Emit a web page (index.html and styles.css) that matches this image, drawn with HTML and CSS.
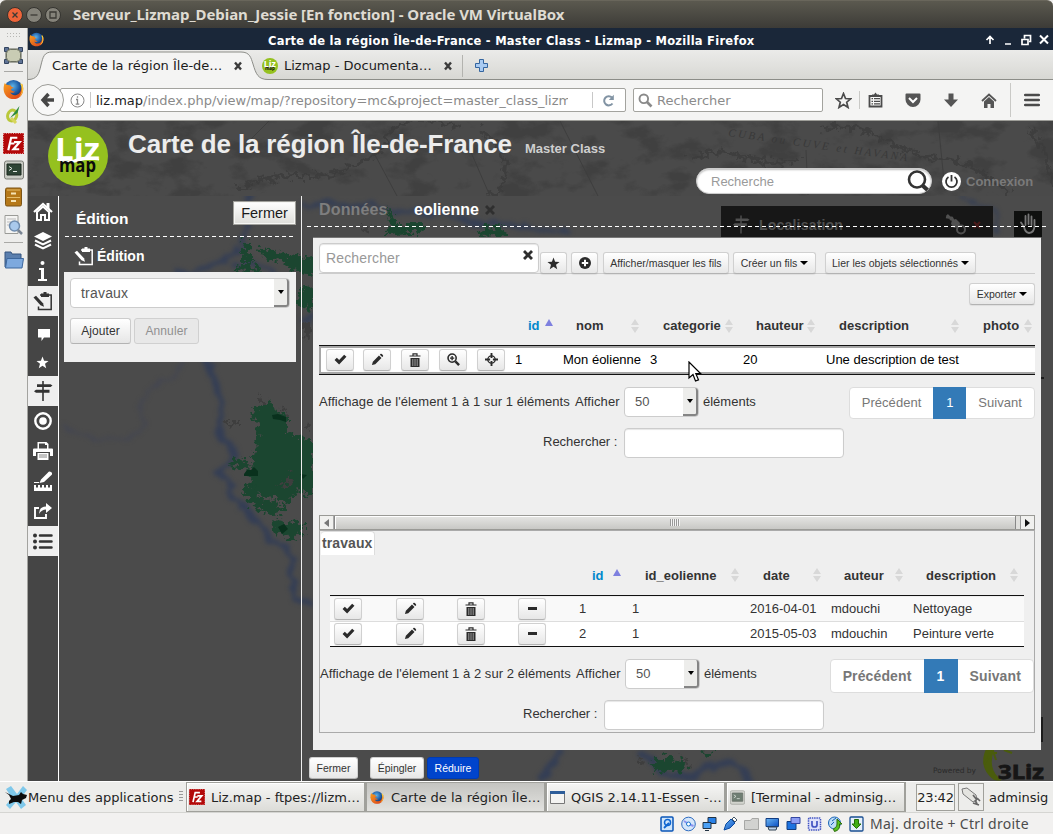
FILE: index.html
```html
<!DOCTYPE html>
<html lang="fr">
<head>
<meta charset="utf-8">
<title>Carte de la région Île-de-France - Master Class - Lizmap</title>
<link rel="stylesheet" href="styles.css">
</head>
<body>
<svg class="defs" width="0" height="0" aria-hidden="true">
  <defs>
    <radialGradient id="fx" cx=".45" cy=".35" r=".6"><stop offset="0" stop-color="#5fb4e8"/><stop offset=".6" stop-color="#1f5ea8"/><stop offset="1" stop-color="#12305f"/></radialGradient>
    <linearGradient id="fo" x1="0" y1="0" x2="1" y2="1"><stop offset="0" stop-color="#f8a11f"/><stop offset="1" stop-color="#d8371a"/></linearGradient>
    <linearGradient id="bl" x1="0" y1="0" x2="1" y2="1"><stop offset="0" stop-color="#6db7f2"/><stop offset="1" stop-color="#0a4fc4"/></linearGradient>
    <symbol id="i-firefox" viewBox="0 0 22 22"><circle cx="11" cy="10.500" r="9.500" fill="url(#fx)"/><path d="M2 4C0 8 0 14 3.500 18c4 4 11 4 15 0 3-3 3.500-9 1.500-13 0 2-.3 3-.8 4 0 4-2 7.500-6 8-3 .3-5-1-5.500-3 2 1 4 .5 5-.8-2 .2-3-1.200-4.500-1.500 0-1.500 2-2 3-3-2 0-3-1-3.500-2.200C5.500 6.500 4.500 6 4 6 3 5.500 2.300 5 2 4z" fill="url(#fo)"/><path d="M18 5c3 5 2 11-2 14 5-2 6.500-9 4-14z" fill="#fbd13c"/></symbol>
    <symbol id="i-fz" viewBox="0 0 22 22"><path d="M0 0h22v22H0z" fill="#b30909"/><path d="M.5.500h21v21H.5z" fill="none" stroke="#e9b3b3" stroke-dasharray="1 1.500"/><path d="M5.500 18L8.500 5H15M7 11h5M11.500 9.500h6l-6.500 7.500h6" fill="none" stroke="#fff" stroke-width="2.300"/></symbol>
    <symbol id="i-term" viewBox="0 0 20 20"><rect x=".5" y="1" width="19" height="18" rx="2" fill="#c9ccc4" stroke="#7b7d77"/><path d="M3 4h14v11H3z" fill="#2e4535" stroke="#1d2a20"/><path d="M5 6.500l3 2-3 2M9 11.500h4" fill="none" stroke="#dfe8df"/></symbol>
    <symbol id="i-check" viewBox="0 0 14 12"><path d="M.5 6.500L3 4l2.500 2.600L11 .8 13.500 3l-8 8.500z"/></symbol>
    <symbol id="i-pencil" viewBox="0 0 14 14"><path d="M1 13l1-3.600 6.600-6.700 2.700 2.700L4.600 12zM9.500 1.900l1-1c.8-.6 3 1.500 2.600 2.500l-1 1z"/></symbol>
    <symbol id="i-trash" viewBox="0 0 12 14"><path d="M.5 3h11M4 2.500V.8h4v1.700" fill="none" stroke="currentColor" stroke-width="1.200"/><path d="M1.500 5h9v9h-9z"/><path d="M3.800 6v7M6 6v7M8.200 6v7" stroke="#aaa" stroke-width=".9"/></symbol>
    <symbol id="i-zoom" viewBox="0 0 14 14"><circle cx="5.500" cy="5.500" r="4.400" fill="none" stroke="currentColor" stroke-width="1.700"/><path d="M3.200 5.500h4.600M5.500 3.200v4.600" stroke="currentColor" stroke-width="1.500"/><path d="M9 9l4 4" stroke="currentColor" stroke-width="2.600"/></symbol>
    <symbol id="i-cross" viewBox="0 0 14 14"><circle cx="7" cy="7" r="4" fill="none" stroke="currentColor" stroke-width="1.400"/><path d="M7 0v5.500M7 8.500V14M0 7h5.500M8.500 7H14" stroke="currentColor" stroke-width="2"/></symbol>
    <symbol id="i-star" viewBox="0 0 14 14"><path d="M7 .5l1.700 4.700 4.800.2-3.800 3 1.300 4.800L7 10.400l-4 2.800 1.300-4.800-3.800-3 4.800-.2z"/></symbol>
    <symbol id="i-plus" viewBox="0 0 12 12"><circle cx="6" cy="6" r="6"/><path d="M2.800 6h6.400M6 2.800v6.400" stroke="#fff" stroke-width="2"/></symbol>
    <symbol id="i-x" viewBox="0 0 12 12"><path d="M3 1l3 3 3-3 2 2-3 3 3 3-2 2-3-3-3 3-2-2 3-3-3-3z"/></symbol>
    <symbol id="i-sort" viewBox="0 0 8 14"><path d="M4 0l4 6H0zM4 14l4-6H0z"/></symbol>
    <symbol id="i-edit" viewBox="0 0 20 20"><path d="M7 4h11.200v14.500H5.500V15.500" fill="none" stroke="currentColor" stroke-width="1.500"/><path d="M8 2.500h2.500V1h3v1.500H16V6H8z"/><path d="M.5 6.500L3 4.800l7 7.500 1 3.500-3.500-1.600z"/></symbol>
    <symbol id="i-sign" viewBox="0 0 20 20"><path d="M9.200 0h1.600v20H9.200z"/><path d="M4 3.200h13.500l2 1.400-2 1.500H4zM16.500 8.700H3L1 10.200l2 1.500h13.500z"/></symbol>
    <symbol id="i-tabx" viewBox="0 0 10 10"><path d="M2 1.500l6 7M8 1.500l-6 7" stroke="currentColor" stroke-width="2.400"/></symbol>
    <symbol id="i-liz" viewBox="0 0 60 60"><circle cx="30" cy="30" r="30" fill="#95c11f"/><text x="7" y="34" fill="#fff" font-family="Open Sans, Noto Sans, sans-serif" font-size="30" font-weight="700" textLength="45" lengthAdjust="spacingAndGlyphs">Liz</text><path d="M9 33q14 3 21-1 9-3 21 1v1.500q-12-2-20 1-8 3-22-1z" fill="#fff"/><text x="11" y="46" fill="#0b0b0b" font-family="Open Sans, Noto Sans, sans-serif" font-size="19" font-weight="700" textLength="37" lengthAdjust="spacingAndGlyphs">map</text></symbol>
  </defs>
</svg>

<header class="vbox-title">
  <span class="wbtn wclose"><svg width="8" height="8" viewBox="0 0 8 8"><path d="M1.500 1.500l5 5M6.500 1.500l-5 5"/></svg></span>
  <span class="wbtn"><svg width="8" height="8" viewBox="0 0 8 8"><path d="M.5 4h7"/></svg></span>
  <span class="wbtn"><svg width="8" height="8" viewBox="0 0 8 8"><path d="M1 1h6v6H1z"/></svg></span>
  <span class="vbox-name">Serveur_Lizmap_Debian_Jessie [En fonction] - Oracle VM VirtualBox</span>
</header>

<div class="vm">
  <nav class="dock">
    <span class="grip"></span>
    <svg class="d1" width="19" height="17" viewBox="0 0 19 17"><path d="M2 2h15v13H2z" fill="#babda6" stroke="#5c6152"/><path d="M.5.500h4v4h-4zM14.500.500h4v4h-4zM.5 12.500h4v4h-4zM14.500 12.500h4v4h-4z" fill="#5f7395" stroke="#33445f"/><rect x="2.500" y="2.500" width="14" height="12" rx="4" fill="#c9ccb4" stroke="#6d7262"/></svg>
    <i class="dsep"></i>
    <svg class="d2" width="21" height="21"><use href="#i-firefox"/></svg>
    <svg class="d3" width="19" height="19" viewBox="0 0 19 19"><ellipse cx="8" cy="9.500" rx="4.500" ry="5.500" fill="none" stroke="#b9c83a" stroke-width="3" transform="rotate(20 8 10)"/><path d="M7 12l5 5" stroke="#d8d65c" stroke-width="3"/><path d="M6 12L15.500 0l-2 7z" fill="#2c8a3c"/></svg>
    <svg class="d4" width="21" height="21"><use href="#i-fz"/></svg>
    <svg class="d5" width="20" height="20"><use href="#i-term"/></svg>
    <svg class="d6" width="17" height="20" viewBox="0 0 17 20"><rect x=".5" y="1" width="16" height="18" rx="1.500" fill="#b57818" stroke="#7c5516"/><path d="M2 3h13M2 10.500h13" stroke="#e5bd6b"/><path d="M6 6.500h5M6 14h5" stroke="#f5e3b5" stroke-width="2"/></svg>
    <svg class="d7" width="19" height="20" viewBox="0 0 19 20"><path d="M1 .5h13v18H1z" fill="#f4f4f2" stroke="#9a9b97"/><path d="M3 4h9M3 7h4M3 10h3" stroke="#bbb"/><circle cx="10.500" cy="11" r="5" fill="#a9c9ec" stroke="#6f8cae" stroke-width="1.500"/><path d="M14 15l4 4" stroke="#7a8694" stroke-width="2.500"/></svg>
    <i class="dsep"></i>
    <svg class="d8" width="20" height="19" viewBox="0 0 20 19"><path d="M1 17V2h6l1 2h9v4" fill="#5a7fae" stroke="#35557f"/><path d="M1.500 18L3 8.500h16.500L18 18z" fill="#7da9de" stroke="#3c679d"/></svg>
  </nav>

  <main class="browser">
    <div class="ff-title">
      <svg width="15" height="15"><use href="#i-firefox"/></svg>
      <b>Carte de la région Île-de-France - Master Class - Lizmap - Mozilla Firefox</b>
      <svg class="ff-ctl" width="64" height="12" viewBox="0 0 64 12" fill="none" stroke="#fff" stroke-width="2"><path d="M5 10V3M1.500 6L5 2.500 8.500 6M20 10h6M37 5.500h6v5h-6zM39.500 4.500V1.500h6v6H44" stroke-width="1.700"/><path d="M55 1.500l8 8M63 1.500l-8 8"/></svg>
    </div>

    <div class="tabs">
      <svg class="tab-shape" width="250" height="30" viewBox="0 0 250 30"><path d="M0 30V29.500C9 29.500 11 24 13 15 15 7 16 2 24 2H213C222 2 223 8 225 14 228 24 230 29.500 240 29.500V30z" fill="#f4f4f3"/><path d="M0 29.500C9 29.500 11 24 13 15 15 7 16 2 24 2H213C222 2 223 8 225 14 228 24 230 29.500 240 29.500H250" fill="none" stroke="#8c8d88"/></svg>
      <span class="tab-name t1">Carte de la région Île-de…</span>
      <svg class="tx1" width="10" height="10"><use href="#i-tabx"/></svg>
      <svg class="fav" width="16" height="16"><use href="#i-liz"/></svg>
      <span class="tab-name t2">Lizmap - Documenta…</span>
      <svg class="tx2" width="10" height="10"><use href="#i-tabx"/></svg>
      <i class="tsep"></i>
      <svg class="tplus" width="13" height="13" viewBox="0 0 13 13"><path d="M4.500.500h4v4h4v4h-4v4h-4v-4h-4v-4h4z" fill="#a9cbf2" stroke="#34659f"/></svg>
    </div>

    <div class="nav">
      <span class="back"><svg width="16" height="16" viewBox="0 0 16 16"><path d="M8.500 2L3 8l5.500 6M3 8h11" fill="none" stroke="#474747" stroke-width="3.400"/></svg></span>
      <div class="url">
        <svg width="15" height="15" viewBox="0 0 15 15" fill="none" stroke="#888"><circle cx="7.500" cy="7.500" r="6.500"/><path d="M7.500 3.200v1.600M6 6.500h1.500V11M5.700 11.200h3.600" stroke-width="1.300"/></svg>
        <i class="vsep"></i>
        <span class="url-text"><b>liz.map</b>/index.php/view/map/?repository=mc&amp;project=master_class_lizm</span>
        <i class="vsep"></i>
        <svg class="reload" width="13" height="13" viewBox="0 0 13 13"><path d="M10.500 9.500A4.600 4.600 0 1 1 10 3.500" fill="none" stroke="#8193a3" stroke-width="2"/><path d="M11.800.8V6H6.800z" fill="#8193a3"/></svg>
      </div>
      <div class="ff-search">
        <svg width="15" height="15" viewBox="0 0 15 15" fill="none" stroke="#8a8a8a"><circle cx="5.800" cy="5.800" r="4.300" stroke-width="1.900"/><path d="M9 9l4.500 4.500" stroke-width="2.600"/></svg>
        <span>Rechercher</span>
      </div>
      <svg class="n1" width="17" height="17" viewBox="0 0 17 17"><path d="M8.500 1.500l2 5 5.200.3-4 3.400 1.300 5.200-4.500-2.900L4 15.400l1.300-5.200-4-3.400 5.200-.3z" fill="none" stroke="#4b4b4b" stroke-width="1.700"/></svg>
      <i class="nsep1"></i>
      <svg class="n2" width="15" height="16" viewBox="0 0 15 16"><path d="M1.500 4h12v10.500h-12z" fill="#f8f8f7" stroke="#4b4b4b" stroke-width="1.800"/><path d="M4 4V2.500h2L7.500.500 9 2.500h2V4z" fill="#4b4b4b"/><path d="M3.500 6.700h1.500M6 6.700h6M3.500 9.300h1.500M6 9.300h6M3.500 11.900h1.500M6 11.900h6" stroke="#4b4b4b" stroke-width="1.300"/></svg>
      <svg class="n3" width="16" height="15" viewBox="0 0 16 15"><path d="M1.500.500h13a1 1 0 0 1 1 1V6.500a7.500 7.500 0 0 1-15 0V1.500a1 1 0 0 1 1-1z" fill="#555"/><path d="M4 5l4 4 4-4" fill="none" stroke="#fff" stroke-width="2"/></svg>
      <svg class="n4" width="14" height="15" viewBox="0 0 14 15"><path d="M4.500.500h5v6H14L7 14 0 6.500h4.500z" fill="#555"/></svg>
      <svg class="n5" width="16" height="15" viewBox="0 0 16 15"><path d="M1 8l7-6.500L15 8" fill="none" stroke="#555" stroke-width="1.800"/><path d="M3 8.500l5-4.600 5 4.600V15H9.500v-4h-3v4H3z" fill="#555"/></svg>
      <i class="nsep2"></i>
      <svg class="n6" width="16" height="14" viewBox="0 0 16 14"><path d="M1.200 2h13.600M1.200 7h13.600M1.200 12h13.600" stroke="#4a4a4a" stroke-width="2.600" stroke-linecap="round"/></svg>
    </div>

    <section class="page">
      <div class="banner">
        <svg class="banner-art" width="1025" height="75" viewBox="28 121 1025 75">
          <filter id="paper" x="0" y="0" width="100%" height="100%" color-interpolation-filters="sRGB"><feTurbulence type="fractalNoise" baseFrequency=".03 .05" numOctaves="6" seed="8"/><feColorMatrix values="0 0 0 0 .22  0 0 0 0 .22  0 0 0 0 .22  5 0 0 0 -2.500"/></filter>
          <filter id="rough" x="-5%" y="-30%" width="110%" height="160%" color-interpolation-filters="sRGB"><feTurbulence type="fractalNoise" baseFrequency=".15" numOctaves="4" seed="3"/><feDisplacementMap in="SourceGraphic" scale="16" xChannelSelector="R" yChannelSelector="G"/></filter>
          <rect x="28" y="121" width="1025" height="75" filter="url(#paper)" opacity=".5"/>
          <g fill="none" stroke="#3b3b3b" stroke-width="4" filter="url(#rough)" opacity=".75"><path d="M240 190q20-15 60-14t50-10M350 165q30-5 40-30t70-8M480 130q30 20 25 45t-20 20M690 158q30-10 50-2t60 6M820 130q30-10 60 8t60 20 70 36M1030 130q20 20 22 60"/></g>
          <path d="M270 120l-30 30M375 155l22 41M470 150l20 46M560 121l38 75M938 121l7 70M806 150l2 45" stroke="#3e3e3e" fill="none"/>
          <text fill="#393939" font-family="Liberation Serif" font-style="italic" font-size="11" letter-spacing="2.500" transform="translate(728 136) rotate(8)">CUBA ou CUVE et HAVANA</text>
        </svg>
        <svg class="logo" width="60" height="60"><use href="#i-liz"/></svg>
        <h1>Carte de la région Île-de-France</h1>
        <span class="subtitle">Master Class</span>
        <div class="pill"><span>Recherche</span><svg width="22" height="22" viewBox="0 0 22 22" fill="none" stroke="#333"><circle cx="10" cy="9.500" r="8" stroke-width="2.600"/><path d="M15 15l5.500 5" stroke-width="4"/></svg></div>
        <div class="login"><svg width="19" height="19" viewBox="0 0 19 19"><circle cx="9.500" cy="9.500" r="9.500" fill="#fff"/><path d="M6.500 5a5.500 5.500 0 1 0 6 0M9.500 3v6.500" fill="none" stroke="#333" stroke-width="1.800"/></svg><span>Connexion</span></div>
      </div>

      <div class="work">
        <svg class="map" width="1025" height="585" viewBox="28 196 1025 585">
          <defs>
            <filter id="soft" filterUnits="userSpaceOnUse" x="28" y="180" width="1025" height="620" color-interpolation-filters="sRGB"><feTurbulence type="fractalNoise" baseFrequency=".09" numOctaves="2" seed="5"/><feDisplacementMap in="SourceGraphic" scale="12" xChannelSelector="R" yChannelSelector="G"/><feGaussianBlur stdDeviation="2.200"/></filter>
            <filter id="edge" filterUnits="userSpaceOnUse" x="28" y="180" width="1025" height="620" color-interpolation-filters="sRGB"><feTurbulence type="fractalNoise" baseFrequency=".18" numOctaves="3" seed="2"/><feDisplacementMap in="SourceGraphic" scale="16" xChannelSelector="R" yChannelSelector="G"/></filter>
          </defs>
          <path d="M28 196h1025v585H28z" fill="#4b4b4b"/>
          <g fill="none" stroke="#343e55" stroke-linejoin="round" filter="url(#soft)">
            <path d="M250 190L247 225 243 245 225 260 205 268 190 274 175 272M205 355L212 372 217 388 222 402 219 420 221 437 236 450 230 462 219 473 230 485 231 497 245 508 255 521 266 528 268 540 285 545 292 560 292 585 300 603 314 604" stroke-width="6"/>
            <path d="M60 426L75 433 92 437 105 441 128 439 146 425 139 405 155 385 175 378 180 362" stroke-width="2.500" stroke="#424553"/>
            <path d="M302 206L330 202 350 208 368 204 400 212 440 212 470 222 520 226 570 232M232 266Q255 258 275 275M302 322L314 318" stroke-width="5"/>
            <path d="M960 196L978 206 994 208 996 236" stroke-width="3"/>
            <path d="M540 781L552 765 562 748M640 752L664 772 690 778 710 766 735 762 750 781" stroke-width="7"/>
          </g>
          <g fill="#1b4630" filter="url(#edge)">
            <path d="M252 410L267 404 275 403 277 412 288 418 288 431 298 437 314 440V500L300 490 287 503 267 497 250 487 253 457 258 437 255 420z"/>
            <path d="M228 465l10-8 12 6-2 8zM240 488l12-6 6 12 10 8 18 4-6 10-24-6zM272 520l32 4 0 8-10 8-18-6zM244 240l6 0 0 12 6 10-14 0zM234 272L240 264 252 264 262 274zM258 248l14 2 20 4 24 6v16l-24-6-8-8-20-4zM296 290l18-4v24l-16-4zM386 206l12 18 28 0-6 8-30 4-6 0 6-12zM478 229l24-3 6 10-28 2zM650 762l20-6 8 6 10-2-4 10-30 2zM698 750l18 2-8 6z"/>
          </g>
          <path d="M244 474l3-4 4 0 3-3 4 4v5l-14 0zM272 415l6-1 8 3 0 5-6-2-7-1zM278 527l6-3 4 5-6 5zM300 474l7 1-4 4z" fill="#09311d"/>
          <g fill="#3e3e3e" filter="url(#edge)"><path d="M223 421l16 0 0 4-14-1zM260 395l5 8-5 2zM280 405l9 12-4 0zM302 425l8 2-3 6zM280 487l12-16-2 14zM302 320l10 8-6 14zM362 226l8 2-4 4zM636 754l8 8-3 4zM682 757l10 6-3 4z"/></g>
          <text x="933" y="773" fill="#2a2a2a" font-family="DejaVu Sans" font-size="7.500" textLength="43">Powered by</text>
          <path d="M988 745c-8 14-6 26 6 35q12 2 4-3-10-10-4-27z" fill="#4a5c0c"/><path d="M985 753h12M989 757l-5 7M1004 750l8 3M992 748l4 12" stroke="#4a5c0c" stroke-width="2"/>
          <text x="998" y="779" fill="#161616" stroke="#161616" stroke-width=".8" font-family="Open Sans" font-weight="700" font-size="20" textLength="46" lengthAdjust="spacingAndGlyphs">3Liz</text>
          <path d="M1040 717h3v25h-3zM1041 377h3v2h-3z" fill="#1b1b1b"/>
        </svg>
        <div class="locate"><svg width="18" height="19"><use href="#i-sign"/></svg><span>Localisation</span>
          <svg class="satellite" width="21" height="21" viewBox="0 0 21 21"><path d="M2 1l5 5M1 3l6 1 2 4" fill="none" stroke="currentColor" stroke-width="2.500"/><path d="M7 6l4-1 4 4-1 4-5 1-3-4z"/><circle cx="16" cy="15.500" r="4" fill="none" stroke="currentColor" stroke-width="2"/></svg>
          <svg class="redx" width="8" height="8" viewBox="0 0 8 8"><path d="M1 1l6 6M7 1L1 7"/></svg></div>
        <div class="hand"><svg width="18" height="22" viewBox="0 0 18 22"><path d="M5 14L2 9.500M6.500 12V3M9.500 11V1.500M12.500 12V3.500M15.500 13V7M5 13.500q1 6 5 6.500 5.500-.5 5.500-7.500" fill="none" stroke="#777" stroke-width="1.800" stroke-linecap="round"/></svg></div>

        <nav class="side">
          <a><svg width="20" height="19" viewBox="0 0 20 19"><path d="M1 10l9-8 9 8" fill="none" stroke="#fff" stroke-width="2.200"/><path d="M13.500 1h3v6h-3z" fill="#fff"/><path d="M4 10v8h4v-5h4v5h4v-8l-6-5.500z" fill="none" stroke="#fff" stroke-width="2"/></svg></a>
          <a><svg width="18" height="18" viewBox="0 0 18 18"><path d="M9 0l9 4.500L9 9 0 4.500z" fill="#fff"/><path d="M1 8.500l8 4 8-4M1 12.500l8 4 8-4" fill="none" stroke="#fff" stroke-width="2"/></svg></a>
          <a><svg width="10" height="20" viewBox="0 0 10 20"><circle cx="4.500" cy="2" r="2" fill="#fff"/><path d="M1 7h5v11h3v2H0v-2h3V9H1z" fill="#fff"/></svg></a>
          <a class="on"><svg width="20" height="20"><use href="#i-edit"/></svg></a>
          <a class="low"><svg width="12" height="12" viewBox="0 0 12 12"><path d="M0 0h12v8.500H6L3.500 12V8.500H0z" fill="#fff"/></svg></a>
          <a class="st"><svg width="13" height="13" fill="#fff"><use href="#i-star"/></svg></a>
          <a class="on"><svg width="20" height="20"><use href="#i-sign"/></svg></a>
          <a><svg width="18" height="18" viewBox="0 0 18 18"><circle cx="9" cy="9" r="7.700" fill="none" stroke="#fff" stroke-width="2.400"/><circle cx="9" cy="9" r="3.800" fill="#fff"/></svg></a>
          <a><svg width="20" height="18" viewBox="0 0 20 18"><path d="M4.500 0h9l2 2v4.500H19q1 0 1 1V14h-3v-4H3v4H0V7.500q0-1 1-1h3.500zM6 1.500v5h8V3h-2V1.500z" fill="#fff" fill-rule="evenodd"/><path d="M4.500 11h11v7h-11z" fill="#fff"/><path d="M6 13h8M6 15h8" stroke="#888"/></svg></a>
          <a><svg width="18" height="20" viewBox="0 0 18 20"><path d="M0 11h5v1H0zM5.500 12L7 8.500l7-7q1-1.500 3-.5t.5 3l-7.500 7z" fill="#fff"/><path d="M0 14h2v2.500h2V14h2v2.500h2V14h2v2.500h2V14h2v2.500h2V14h2v6H0z" fill="#fff"/></svg></a>
          <a><svg width="18" height="16" viewBox="0 0 18 16"><path d="M5 5H1v10h11v-4" fill="none" stroke="#fff" stroke-width="1.900"/><path d="M5 11q0-7.500 7-7.500V0l6 5-6 5V6.500Q7.500 6.500 5 11z" fill="#fff"/></svg></a>
          <a class="on"><svg width="20" height="17" viewBox="0 0 20 17"><circle cx="2" cy="2.500" r="2"/><circle cx="2" cy="8.500" r="2"/><circle cx="2" cy="14.500" r="2"/><path d="M7 2.500h11.500M7 8.500h11.500M7 14.500h11.500" stroke="#333" stroke-width="2.500" stroke-linecap="round"/></svg></a>
        </nav>

        <aside class="edition">
          <div class="ed-head"><h2>Édition</h2><button class="classic">Fermer</button></div>
          <h3><svg width="20" height="20"><use href="#i-edit"/></svg><span>Édition</span></h3>
          <div class="ed-body">
            <div class="select wide"><span>travaux</span><i></i></div>
            <div class="ed-actions"><button class="btn">Ajouter</button><button class="btn off">Annuler</button></div>
          </div>
        </aside>

        <section class="data">
          <div class="dtabs"><b class="dim">Données</b><b>eolienne</b><svg width="12" height="12"><use href="#i-x"/></svg></div>
          <div class="panel">
            <div class="tools">
              <div class="field"><span>Rechercher</span><svg width="12" height="12"><use href="#i-x"/></svg></div>
              <button class="mini w27"><svg width="13" height="13"><use href="#i-star"/></svg></button>
              <button class="mini w27 g4"><svg width="12" height="12"><use href="#i-plus"/></svg></button>
              <button class="mini w126 g5">Afficher/masquer les fils</button>
              <button class="mini w83 g4">Créer un fils<i class="caret"></i></button>
              <button class="mini w151 g9">Lier les objets sélectionnés<i class="caret"></i></button>
            </div>
            <div class="export"><button class="mini w66">Exporter<i class="caret"></i></button></div>

            <div class="main-head">
              <b class="blue h-id">id</b><svg class="up" width="8" height="7" viewBox="0 0 8 7"><path d="M4 0l4 7H0z"/></svg>
              <b>nom</b><svg class="sort"><use href="#i-sort"/></svg>
              <b>categorie</b><svg class="sort"><use href="#i-sort"/></svg>
              <b>hauteur</b><svg class="sort"><use href="#i-sort"/></svg>
              <b>description</b><svg class="sort"><use href="#i-sort"/></svg>
              <b>photo</b><svg class="sort"><use href="#i-sort"/></svg>
            </div>
            <div class="main-row">
              <button class="mini ic"><svg width="13" height="11"><use href="#i-check"/></svg></button>
              <button class="mini ic"><svg width="13" height="13"><use href="#i-pencil"/></svg></button>
              <button class="mini ic"><svg width="12" height="14"><use href="#i-trash"/></svg></button>
              <button class="mini ic"><svg width="13" height="13"><use href="#i-zoom"/></svg></button>
              <button class="mini ic"><svg width="13" height="13"><use href="#i-cross"/></svg></button>
              <span>1</span><span>Mon éolienne</span><span>3</span><span>20</span><span>Une description de test</span>
            </div>

            <div class="info">
              <span class="i-text">Affichage de l'élement 1 à 1 sur 1 éléments</span><span class="i-show">Afficher</span>
              <div class="select"><span>50</span><i></i></div><span class="i-el">éléments</span>
              <div class="pager"><span>Précédent</span><em>1</em><span>Suivant</span></div>
            </div>
            <div class="find"><span>Rechercher :</span><div class="field"></div></div>

            <div class="scroll">
              <span class="arrow"><svg width="5" height="8" viewBox="0 0 5 8"><path d="M5 0v8L0 4z" fill="#777"/></svg></span>
              <span class="thumb"><i></i></span>
              <span class="arrow right"><svg width="5" height="8" viewBox="0 0 5 8"><path d="M0 0v8l5-4z" fill="#111"/></svg></span>
            </div>

            <div class="child">
              <b class="child-tab">travaux</b>
              <div class="child-head">
                <b class="blue">id</b><svg class="up" width="8" height="7" viewBox="0 0 8 7"><path d="M4 0l4 7H0z"/></svg>
                <b>id_eolienne</b><svg class="sort"><use href="#i-sort"/></svg>
                <b>date</b><svg class="sort"><use href="#i-sort"/></svg>
                <b>auteur</b><svg class="sort"><use href="#i-sort"/></svg>
                <b>description</b><svg class="sort"><use href="#i-sort"/></svg>
              </div>
              <div class="child-rows">
                <div class="crow odd">
                  <button class="mini ic"><svg width="13" height="11"><use href="#i-check"/></svg></button>
                  <button class="mini ic"><svg width="13" height="13"><use href="#i-pencil"/></svg></button>
                  <button class="mini ic"><svg width="12" height="14"><use href="#i-trash"/></svg></button>
                  <button class="mini ic"><i class="minus"></i></button>
                  <span>1</span><span>1</span><span>2016-04-01</span><span>mdouchi</span><span>Nettoyage</span>
                </div>
                <div class="crow">
                  <button class="mini ic"><svg width="13" height="11"><use href="#i-check"/></svg></button>
                  <button class="mini ic"><svg width="13" height="13"><use href="#i-pencil"/></svg></button>
                  <button class="mini ic"><svg width="12" height="14"><use href="#i-trash"/></svg></button>
                  <button class="mini ic"><i class="minus"></i></button>
                  <span>2</span><span>1</span><span>2015-05-03</span><span>mdouchin</span><span>Peinture verte</span>
                </div>
              </div>
              <div class="info">
                <span class="i-text">Affichage de l'élement 1 à 2 sur 2 éléments</span><span class="i-show">Afficher</span>
                <div class="select"><span>50</span><i></i></div><span class="i-el">éléments</span>
                <div class="pager bold"><span>Précédent</span><em>1</em><span>Suivant</span></div>
              </div>
              <div class="find"><span>Rechercher :</span><div class="field"></div></div>
            </div>
          </div>
          <div class="foot"><button class="mini">Fermer</button><button class="mini f2">Épingler</button><button class="mini f3">Réduire</button></div>
        </section>
        <svg class="cursor" width="14" height="21" viewBox="0 0 14 21"><path d="M1 1v16l4-3.500 2.500 6.500 3-1.200L7.800 12.500H12.500z" fill="#fff" stroke="#000" stroke-width="1.200"/></svg>
      </div>
    </section>
  </main>
</div>

<footer class="taskbar">
  <svg class="xfce" width="22" height="23" viewBox="0 0 22 23"><path d="M1 3l5-3 6 8 6-8 4 4-6 8 5 7-5 4-5-7-6 7-4-4 6-7z" fill="#7fc8ea"/><path d="M0 6l6 3 2 1 6-1 2-3 2 2 4 1-1 3-4 2-1 4-3-2-4 0-5 2v-3l2-2-2-4z" fill="#0c0c0c"/></svg>
  <span class="menu">Menu des applications</span><i class="handle"></i>
  <div class="task"><svg width="16" height="16"><use href="#i-fz"/></svg><span>Liz.map - ftpes://lizm…</span></div>
  <div class="task active"><svg width="14" height="15"><use href="#i-firefox"/></svg><span>Carte de la région Île…</span></div>
  <div class="task"><svg width="15" height="13" viewBox="0 0 15 13"><path d="M.5.500h14v12H.5z" fill="#f4f4f2" stroke="#777"/><path d="M0 0h15v3H0z" fill="#2d5d99"/></svg><span>QGIS 2.14.11-Essen -…</span></div>
  <div class="task"><svg width="15" height="15" opacity=".65"><use href="#i-term"/></svg><span>[Terminal - adminsig…</span></div>
  <span class="clock">23:42</span>
  <span class="plug"><svg width="20" height="20" viewBox="0 0 20 20"><path d="M1 2l5-1 9 7 1 5-4 2L2 7z" fill="#e4e4e0" stroke="#777"/><path d="M12 8l4 5M14 13l2 4M16 11l3 3M12 16l6 2" stroke="#666" stroke-width="1.700"/></svg></span>
  <span class="user">adminsig</span>
</footer>

<footer class="status">
  <svg viewBox="0 0 15 16"><rect x="1" y="1" width="12" height="14" rx="1" fill="#cfe5fb" stroke="#0a55b8" stroke-width="1.500"/><circle cx="7.500" cy="6.500" r="3" fill="none" stroke="#0d64d0" stroke-width="1.500"/><path d="M4 12l5-5" stroke="#0d64d0" stroke-width="1.800"/></svg>
  <svg viewBox="0 0 15 16"><circle cx="7.500" cy="8" r="6.800" fill="#d5e6fa" stroke="#2e6cc0"/><path d="M7.500 8L3 5M7.500 8l5 2" stroke="#8c93ef" stroke-width="2"/><circle cx="7.500" cy="8" r="2" fill="#fff" stroke="#1574cf"/></svg>
  <svg viewBox="0 0 15 16"><path d="M6 1.500h8v6H6z" fill="#2a81e8" stroke="#234"/><path d="M1 6.500h8v6H1zM3 14.500h4" fill="#4ba0f5" stroke="#234"/></svg>
  <svg viewBox="0 0 15 16"><path d="M1 14l2-6 5-5 4 4-5 5z" fill="url(#bl)" stroke="#0b4aa0"/><path d="M9 3l2-2 3 3-2 2z" fill="#fff" stroke="#456"/></svg>
  <svg viewBox="0 0 15 16"><path d="M.5 13.500v-9h6l1.500-2h6.500v11z" fill="#d2d2d0" stroke="#a7a7a5"/></svg>
  <svg viewBox="0 0 15 16"><path d="M1 2.500h12.500v8H1z" fill="url(#bl)" stroke="#123c82"/><path d="M3 11h9l-1 3H4z" fill="#bcd1ec" stroke="#345"/></svg>
  <svg viewBox="0 0 15 16"><path d="M1 5.500h9v8H1z" fill="#1c72e0" stroke="#113d80"/><path d="M5 1.500h9v6H5z" fill="#8c9cf2" stroke="#3346a2"/></svg>
  <svg viewBox="0 0 15 16"><rect x="1.500" y="2" width="12" height="12" rx="1" fill="#dfe2fb" stroke="#4254c2" stroke-width="1.500" stroke-dasharray="1.500 .8"/><path d="M5 5v4q0 2 2.500 2T10 9V5" fill="none" stroke="#4254c2" stroke-width="1.700"/></svg>
  <svg viewBox="0 0 15 16"><circle cx="6.500" cy="7" r="6" fill="#bcdcf7" stroke="#1763b4"/><path d="M4 5l4-3M3 9l3-3" stroke="#1763b4"/><path d="M9 3l5 5-2.500 0q1 6-5 7.500-2-3 0-3.500 3-1 2.500-4z" fill="#58c322" stroke="#2c6c0c"/></svg>
  <svg viewBox="0 0 15 16"><rect x="1" y="1" width="13" height="14" rx="1" fill="#e6f0fb" stroke="#1a4f92" stroke-width="1.300"/><path d="M5.500 3.500h4V8H12l-4.500 4.500L3 8h2.500z" fill="#41ad17" stroke="#246d08"/></svg>
  <span>Maj. droite + Ctrl droite</span>
</footer>
</body>
</html>
```

FILE: styles.css
```css
* { box-sizing: border-box; }
body { margin: 0; width: 1053px; height: 834px; overflow: hidden; display: flex; flex-direction: column; font-family: "Liberation Sans", Arial, sans-serif; font-size: 13px; color: #333; background: #f2f1f0; }
svg { flex: none; display: block; }
.defs { position: absolute; }
h1, h2, h3 { margin: 0; }
span, b, button, h1, h2, h3 { white-space: nowrap; }
button { font-family: inherit; margin: 0; padding: 0; flex: none; }

/* host window */
.vbox-title { height: 28px; flex: none; display: flex; align-items: center; padding-left: 7px; gap: 3px; background: linear-gradient(#5b594f, #3c3b37); border-radius: 6px 6px 0 0; border-top: 1px solid #69665b; }
.wbtn { width: 16px; height: 16px; border-radius: 50%; background: #85837a; border: 1px solid #34332f; display: grid; place-items: center; }
.wclose { background: #ee6439; }
.wbtn svg { fill: none; stroke: #3b3a35; stroke-width: 1.3; }
.vbox-name { font: 700 15px "Noto Sans", sans-serif; color: #dfdbd2; margin: -2px 0 0 9px; letter-spacing: -.07px; }
.vm { display: flex; height: 753px; flex: none; }
.dock { width: 28px; flex: none; background: #ededeb; border-right: 1px solid #a3a39f; display: flex; flex-direction: column; align-items: center; padding-top: 4px; }
.grip { width: 15px; height: 7px; background: radial-gradient(circle, #b7b7b4 0.8px, transparent 1px) 0 0 / 3px 3px; }
.d1 { margin-top: 8px; }
.dsep { width: 19px; height: 1px; background: #a9a9a6; flex: none; margin: 7px 0; }
.d2 { margin-top: 0; } .d3 { margin-top: 6px; } .d4 { margin-top: 8px; } .d5 { margin-top: 6px; } .d6 { margin-top: 7px; } .d7 { margin-top: 8px; }
.browser { width: 1025px; display: flex; flex-direction: column; }

/* browser chrome */
.ff-title { height: 22px; background: #1a2739; color: #fff; display: flex; align-items: center; padding-left: 1px; font: 700 11.500px "DejaVu Sans", sans-serif; letter-spacing: .25px; }
.ff-title b { width: 487px; margin-left: 224px; margin-top: 3px; }
.ff-ctl { margin-left: 230px; margin-top: 2px; }
.tabs { height: 30px; position: relative; display: flex; align-items: center; padding-top: 2px; background: linear-gradient(#ebebe9, #d8d8d4); border-bottom: 1px solid #8c8d88; font-family: "DejaVu Sans", sans-serif; font-size: 13px; color: #1c1c1c; }
.tab-shape { position: absolute; left: 0; top: 0; }
.tab-name, .tabs > svg { z-index: 1; }
.tabs > .tab-shape { z-index: 0; }
.t1 { width: 181px; margin-left: 24px; }
.tabs svg { color: #3b3b3b; }
.fav { margin-left: 19px; }
.t2 { width: 159px; margin-left: 6px; }
.tsep { width: 1px; height: 22px; background: #b3b3af; margin: 0 12px 0 9px; }
.nav { height: 41px; display: flex; align-items: center; background: #f4f4f3; border-bottom: 1px solid #9d9d98; font-family: "DejaVu Sans", sans-serif; font-size: 13px; padding-left: 4px; }
.back { width: 32px; height: 32px; border-radius: 50%; border: 1px solid #9c9c97; background: #f8f8f7; display: grid; place-items: center; z-index: 1; flex: none; }
.url { width: 566px; height: 24px; margin-left: -4px; border: 1px solid #a3a39e; border-radius: 2px; background: #fff; display: flex; align-items: center; padding-left: 9px; flex: none; }
.vsep { width: 1px; height: 16px; background: #c8c8c8; margin: 0 5px; flex: none; }
.url-text { width: 472px; overflow: hidden; color: #8a8a8a; margin-right: 19px; }
.url-text b { font-weight: 400; color: #1c1c1c; }
.reload { margin-left: 4px; }
.ff-search { width: 190px; height: 24px; margin-left: 7px; border: 1px solid #a3a39e; border-radius: 2px; background: #fff; display: flex; align-items: center; padding-left: 4px; gap: 4px; color: #8b8b8b; flex: none; }
.nav i[class^="nsep"] { width: 1px; background: #c9c9c6; }
.n1 { margin-left: 12px; } .nsep1 { height: 18px; margin-left: 7px; } .n2 { margin-left: 8px; } .n3 { margin-left: 22px; } .n4 { margin-left: 23px; } .n5 { margin-left: 23px; } .nsep2 { height: 34px; margin-left: 13px; } .n6 { margin-left: 13px; }

/* page banner */
.page { height: 660px; }
.banner { position: relative; height: 75px; background: #4a4a4a; display: flex; padding-left: 20px; }
.banner-art { position: absolute; left: 0; top: 0; }
.banner > :not(.banner-art) { z-index: 1; }
.logo { margin-top: 5px; }
h1 { font-size: 26px; line-height: 30px; width: 397px; margin: 8px 0 0 20px; color: #ececec; letter-spacing: -.15px; }
.subtitle { font-weight: 700; width: 79px; margin: 20px 0 0; color: #cfcfcf; }
.pill { width: 236px; height: 26px; margin: 47px 0 0 92px; border-radius: 13px; background: #fff; border: 1px solid #ccc; box-shadow: inset 0 1px 2px #bbb; display: flex; align-items: center; justify-content: space-between; padding: 0 2px 0 14px; color: #9a9a9a; flex: none; }
.login { height: 26px; margin: 47px 0 0 10px; display: flex; align-items: center; gap: 5px; color: #7a7a7a; font-weight: 700; }

/* work area */
.work { position: relative; height: 585px; display: flex; border-right: 1px solid #f2f2f2; }
.map { position: absolute; left: 0; top: 0; }
.locate { position: absolute; left: 693px; top: 10px; width: 272px; height: 31px; background: #171717; color: #505050; fill: currentColor; display: flex; align-items: center; padding: 6px 0 0 11px; font-weight: 700; font-size: 14px; letter-spacing: .2px; }
.locate span { width: 186px; margin-left: 9px; }
.redx { margin-left: 7px; stroke: #4a1a1a; stroke-width: 2; }
.hand { position: absolute; left: 986px; top: 15px; width: 28px; height: 26px; background: #0f100f; display: grid; place-items: center; }
.side { position: relative; width: 31px; flex: none; background: #454545; border-right: 1px solid #fff; }
.side a { width: 30px; height: 30px; display: grid; place-items: center; fill: #333; color: #333; }
.side .on { background: #efefef; }
.side .low { padding: 8px 0 0 1px; } .side .st { padding: 3px 1px 0 0; }
.edition { position: relative; width: 243px; flex: none; border-right: 1px solid #eee; padding: 5px 5px 0 5px; }
.ed-head { height: 36px; display: flex; justify-content: space-between; margin-left: 1px; background: repeating-linear-gradient(90deg, #fff 0 4px, transparent 4px 7px) bottom / 100% 1px no-repeat; }
h2 { font-size: 15.500px; line-height: 20px; color: #fff; margin: 8px 0 0 11px; }
.classic { width: 63px; height: 24px; font-size: 14.500px; border: 1px solid #a0a09b; background: linear-gradient(#fff, #dededa); color: #1a1a1a; box-shadow: inset 0 0 0 1px #f6f6f4; }
h3 { display: flex; align-items: center; gap: 3px; height: 35px; padding: 2px 0 0 10px; font-size: 14px; color: #fff; fill: #fff; }
.ed-body { height: 90px; background: #efefef; padding: 6px; }
.select { width: 75px; height: 30px; border: 1px solid #ccc; border-radius: 4px; background: #fff; display: flex; justify-content: space-between; align-items: center; padding-left: 10px; color: #555; flex: none; }
.select i { width: 15px; height: 28px; border: solid #858585; border-width: 0 2px 2px 0; border-radius: 0 3px 3px 0; background: #ededeb; display: grid; place-items: center; }
.select i::after, .caret { content: ""; border: solid transparent; border-width: 4px 3px 0; border-top-color: #000; }
.wide { width: 220px; font-size: 14px; letter-spacing: .2px; }
.ed-actions { display: flex; gap: 3px; margin-top: 10px; }
.btn { width: 61px; height: 26px; border: 1px solid #ccc; border-bottom-color: #b3b3b3; border-radius: 3px; background: linear-gradient(#fff, #e6e6e6); font-size: 12px; color: #333; letter-spacing: .1px; }
.off { width: 65px; background: #e8e8e8; color: #909090; border-color: #d0d0d0; }

/* attribute data */
.data { position: relative; width: 749px; height: 585px; padding: 0 0 0 5px; }
.dtabs { height: 31px; display: flex; width: 740px; padding: 4px 0 0 12px; line-height: 20px; font-size: 16px; color: #fff; background: repeating-linear-gradient(90deg, #fff 0 4px, transparent 4px 7px) bottom / 100% 1px no-repeat; }
.dtabs .dim { color: #7e7e7e; width: 95px; letter-spacing: .15px; }
.dtabs svg { fill: #2f2f2f; margin: 4px 0 0 5px; }
.panel { width: 728px; height: 513px; margin: 10px 0 0 6px; padding: 5px 6px 0; background: #efefef; border-top: 1px solid #777; }
.tools { height: 31px; display: flex; align-items: flex-end; background: linear-gradient(#ccc, #ccc) bottom / 100% 1px no-repeat; }
.field { width: 220px; height: 30px; border: 1px solid #ccc; border-radius: 4px; background: #fff; box-shadow: inset 0 1px 1px #e6e6e6; flex: none; }
.tools .field { display: flex; justify-content: space-between; padding: 5px 4px 0 6px; font-size: 14px; color: #999; line-height: 18px; align-self: flex-start; margin-right: 1px; letter-spacing: .15px; }
.tools .field svg { fill: #2e2e2e; }
.mini { height: 22px; border: 1px solid #d0d0d0; border-bottom-color: #b3b3b3; border-radius: 3px; background: linear-gradient(#fff, #e7e7e7); font-size: 10.500px; color: #333; fill: #2b2b2b; display: flex; align-items: center; justify-content: center; box-shadow: 0 1px 1px #0001; }
.mini svg { color: #2b2b2b; }
.w27 { width: 27px; } .w126 { width: 126px; } .w83 { width: 83px; } .w151 { width: 151px; } .w66 { width: 66px; }
.g4 { margin-left: 4px; } .g5 { margin-left: 5px; } .g9 { margin-left: 9px; }
.caret { margin-left: 3px; border-width: 4.500px 4px 0; }
.export { display: flex; justify-content: flex-end; margin-top: 9px; }
.main-head, .child-head { display: grid; align-items: center; height: 20px; font-size: 13px; }
.main-head { margin-top: 10px; padding-left: 209px; grid-template-columns: 17px 31px 55px 32px 62px 31px 51px 32px 112px 32px 41px 8px; height: 30px; padding-bottom: 9px; }
.blue { color: #0088cc; }
.up { fill: #7e80df; margin-bottom: 6px; }
.sort { width: 8px; height: 14px; fill: #d8d8d8; }
.main-row { height: 30px; border-top: 1px solid #111; border-bottom: 1px solid #111; background: #fff; box-shadow: inset 2px 2px #a6a6a6, inset 0 -2px #a6a6a6; display: grid; grid-template-columns: 37px 38px 38px 38px 38px 48px 87px 93px 83px 1fr; padding: 0 0 1px 7px; align-items: center; color: #000; }
.ic { width: 28px; height: 22px; }
.info { position: relative; display: flex; margin-top: 12px; height: 32px; line-height: 30px; }
.i-text { width: 256px; letter-spacing: .05px; }
.i-show { width: 49px; letter-spacing: .1px; }
.i-el { margin-left: 4px; }
.pager { display: flex; height: 32px; margin-left: auto; border: 1px solid #ddd; border-radius: 4px; background: #fff; color: #777; }
.pager span { padding: 0 12px; letter-spacing: .04px; }
.pager em { width: 33px; margin: -1px 0; text-align: center; font-style: normal; color: #fff; background: #337ab7; line-height: 32px; }
.find { display: flex; gap: 7px; margin: 9px 0 0 224px; line-height: 27px; height: 30px; }
.scroll { margin-top: 57px; height: 15px; border: 1px solid #9a9a96; display: flex; background: #e0e0dd; }
.arrow { width: 14px; background: #f1f1ef; border-right: 1px solid #aaa; display: grid; place-items: center; }
.thumb { flex: 1; border-left: 1px solid #888; border-right: 1px solid #888; margin-right: 4px; background: linear-gradient(#e6e6e4, #c8c8c5); display: grid; place-items: center; box-shadow: inset 1px 1px #fff; }
.thumb i { width: 10px; height: 7px; background: repeating-linear-gradient(90deg, #999 0 1px, #f4f4f4 1px 2px); }
.right { border: 0; border-left: 1px solid #999; }
.child { height: 203px; border: 1px solid #aaa; }
.child-tab { display: block; width: 54px; height: 24px; margin: 0 0 0 1px; padding-left: 1px; border: solid #ddd; border-width: 1px 1px 0 0; border-radius: 4px 4px 0 0; background: #fff; color: #555; font-size: 14px; line-height: 22px; letter-spacing: .1px; }
.child-head { margin-top: 10px; padding-left: 272px; grid-template-columns: 21px 32px 86px 32px 50px 31px 51px 31px 84px 8px; }
.child-rows { width: 694px; margin: 10px 0 0 10px; border: solid #111; border-width: 1px 0; }
.crow { height: 25px; display: grid; grid-template-columns: 62px 61px 61px 61px 53px 118px 81px 82px 1fr; align-items: center; padding: 0 0 1px 4px; background: #fff; border-top: 1px solid #ddd; }
.odd { background: #f9f9f9; border-top-color: #eee; }
.minus { width: 9px; height: 3px; background: #2b2b2b; }
.child .info { margin-top: 12px; height: 33px; }
.child .find { margin: 8px 0 0 203px; }
.bold { font-weight: 700; font-size: 14px; height: 34px; line-height: 32px; }
.pager.bold span { letter-spacing: .13px; }
.pager.bold em { width: 34px; line-height: 34px; }
.foot { display: flex; margin: 7px 0 0 2px; }
.foot .mini { width: 49px; box-shadow: none; }
.foot .f2 { width: 54px; margin-left: 12px; }
.foot .f3 { width: 52px; margin-left: 3px; background: #0044cc; border-color: #003bb3; color: #fff; }
.cursor { position: absolute; left: 660px; top: 165px; }

/* guest taskbar and host status bar */
.taskbar { height: 31px; flex: none; display: flex; align-items: center; background: #ededeb; border-top: 1px solid #fff; font-family: "DejaVu Sans", sans-serif; font-size: 13px; color: #222; }
.xfce { margin-left: 5px; }
.menu { width: 151px; margin-left: 1px; }
.handle { width: 4px; height: 12px; margin-right: 3px; background: repeating-linear-gradient(#999 0 1px, transparent 1px 3px); }
.task { width: 180px; height: 30px; border: 1px solid #a0a09b; border-right-width: 2px; background: linear-gradient(#f6f6f5, #dcdcd8); display: flex; align-items: center; gap: 6px; padding-left: 2px; flex: none; box-shadow: inset 1px 1px #fff; }
.task + .task { padding-left: 3px; }
.active { background: linear-gradient(#c4c4c1, #e2e2df); box-shadow: none; gap: 7px; }
.clock { height: 27px; width: 39px; margin-left: 10px; border: 1px solid #a0a09b; line-height: 26px; display: grid; place-items: center; background: #f3f3f1; letter-spacing: -.2px; }
.plug { width: 26px; height: 28px; margin-left: 3px; border: 1px solid #a0a09b; display: grid; place-items: center; }
.user { margin-left: 5px; }
.status { height: 22px; flex: none; border-top: 1px solid #d5d5d2; display: flex; align-items: center; gap: 6px; padding-left: 660px; font: 14px "Noto Sans", sans-serif; color: #4c4c4c; }
.status svg { width: 15px; height: 16px; }
.status span { letter-spacing: .27px; }
```
